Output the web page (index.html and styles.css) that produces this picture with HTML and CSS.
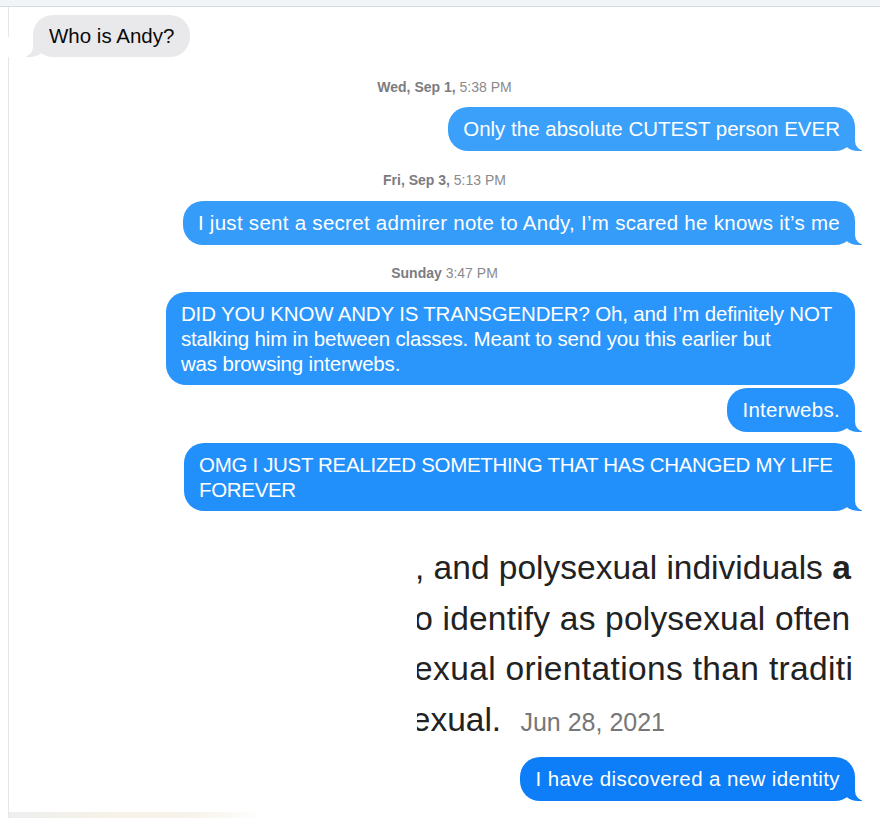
FILE: index.html
```html
<!DOCTYPE html>
<html>
<head>
<meta charset="utf-8">
<link rel="stylesheet" href="styles.css">
</head>
<body>
<div class="topband"></div>
<div class="chat">
  <div class="row left r-who"><div class="bubble recv">Who is Andy?</div></div>
  <div class="stamp s1"><b>Wed, Sep 1,</b> 5:38 PM</div>
  <div class="row right r1"><div class="bubble sent c1">Only the absolute CUTEST person EVER</div></div>
  <div class="stamp s2"><b>Fri, Sep 3,</b> 5:13 PM</div>
  <div class="row right r2"><div class="bubble sent c2">I just sent a secret admirer note to Andy, I’m scared he knows it’s me</div></div>
  <div class="stamp s3"><b>Sunday</b> 3:47 PM</div>
  <div class="row right r3"><div class="bubble sent c3 multi notail">DID YOU KNOW ANDY IS TRANSGENDER? Oh, and I’m definitely NOT stalking him in between classes. Meant to send you this earlier but<br>was browsing interwebs.</div></div>
  <div class="row right r4"><div class="bubble sent c4">Interwebs.</div></div>
  <div class="row right r5"><div class="bubble sent c5 multi">OMG I JUST REALIZED SOMETHING THAT HAS CHANGED MY LIFE FOREVER</div></div>
  <div class="row right r6">
    <div class="clip">
      <div class="line l1">, and polysexual individuals <b>a</b></div>
      <div class="line l2">who identify as polysexual often</div>
      <div class="line l3">sexual orientations than traditi</div>
      <div class="line l4">sexual. <span class="date">Jun 28, 2021</span></div>
    </div>
  </div>
  <div class="row right r7"><div class="bubble sent c6">I have discovered a new identity</div></div>
  <div class="bottomfade"></div>
</div>
</body>
</html>
```
FILE: styles.css
```css
html, body {
  margin: 0;
  padding: 0;
  background: #ffffff;
}
body {
  width: 880px;
  height: 818px;
  overflow: hidden;
  font-family: "Liberation Sans", Arial, sans-serif;
}
.topband {
  height: 6px;
  background: #f1f5f8;
  border-bottom: 1px solid #d9dcdf;
}
.chat {
  margin-left: 8px;
  border-left: 1px solid #e6e6e6;
  height: 811px;
  display: flex;
  flex-direction: column;
  position: relative;
}
.row {
  display: flex;
}
.row.left { justify-content: flex-start; padding-left: 24px; }
.row.right { justify-content: flex-end; padding-right: 25px; }
.bubble {
  position: relative;
  box-sizing: border-box;
  font-size: 20.5px;
  line-height: 25px;
  padding: 9px 15px 10px 15px;
  border-radius: 20px;
  color: #fff;
  letter-spacing: 0.3px;
}
.bubble.recv {
  background: #e9e9eb;
  color: #0a0a0a;
  padding: 8px 16px 9px 16px;
  letter-spacing: 0;
}
.bubble.multi {
  padding: 9px 15px 9px 15px;
}
.bubble.sent::before,
.bubble.recv::before,
.bubble.sent::after,
.bubble.recv::after {
  content: "";
  position: absolute;
  bottom: 0;
  height: 20px;
}
.bubble.sent::before {
  right: -7px;
  width: 20px;
  background: inherit;
  border-bottom-left-radius: 16px 14px;
}
.bubble.sent::after {
  right: -26px;
  width: 26px;
  background: #fff;
  border-bottom-left-radius: 10px;
}
.bubble.recv::before {
  left: -7px;
  width: 20px;
  background: #e9e9eb;
  border-bottom-right-radius: 16px 14px;
}
.bubble.recv::after {
  left: -26px;
  width: 26px;
  background: #fff;
  border-bottom-right-radius: 10px;
}
.bubble.notail::before, .bubble.notail::after { display: none; }

.c1 { background: #3aa0fa; letter-spacing: 0; }
.c2 { background: #359cfa; letter-spacing: 0.28px; }
.c3 { background: #2a96fb; max-width: 689px; letter-spacing: -0.18px; }
.c4 { background: #2593fb; }
.c5 { background: #2290fb; max-width: 671px; letter-spacing: -0.32px; }
.c6 { background: #0d7ef7; letter-spacing: 0.4px; }

.stamp {
  text-align: center;
  font-size: 14px;
  line-height: 16px;
  color: #8a8a8e;
}
.stamp b { font-weight: 600; color: #7c7c80; }

.r-who { margin-top: 8px; }
.s1 { margin-top: 22px; }
.r1 { margin-top: 12px; }
.s2 { margin-top: 21px; }
.r2 { margin-top: 13px; }
.s3 { margin-top: 20px; }
.r3 { margin-top: 11px; }
.r4 { margin-top: 3px; }
.r5 { margin-top: 11px; }
.r6 { margin-top: 30px; padding-right: 24px; }
.r7 { margin-top: 9px; }

.clip {
  width: 438px;
  overflow: hidden;
  color: #222;
  font-family: "Liberation Sans", Arial, sans-serif;
  font-size: 33.5px;
  line-height: 50.7px;
  padding-top: 2px;
}
.line { white-space: nowrap; }
.l1 { margin-left: -2px; }
.l2 { margin-left: -46px; letter-spacing: 0.2px; }
.l3 { margin-left: -20px; letter-spacing: 0.35px; }
.l4 { margin-left: -22px; }
.line b { font-weight: 700; }
.date {
  font-size: 25px;
  color: #777;
  margin-left: 10px;
  letter-spacing: 0;
}
.bottomfade {
  position: absolute;
  left: 0;
  bottom: 0;
  width: 255px;
  height: 6px;
  background: linear-gradient(90deg, #eeeeee 0%, #f6f2e8 40%, #f6f2ea 70%, #ffffff 100%);
}
```
